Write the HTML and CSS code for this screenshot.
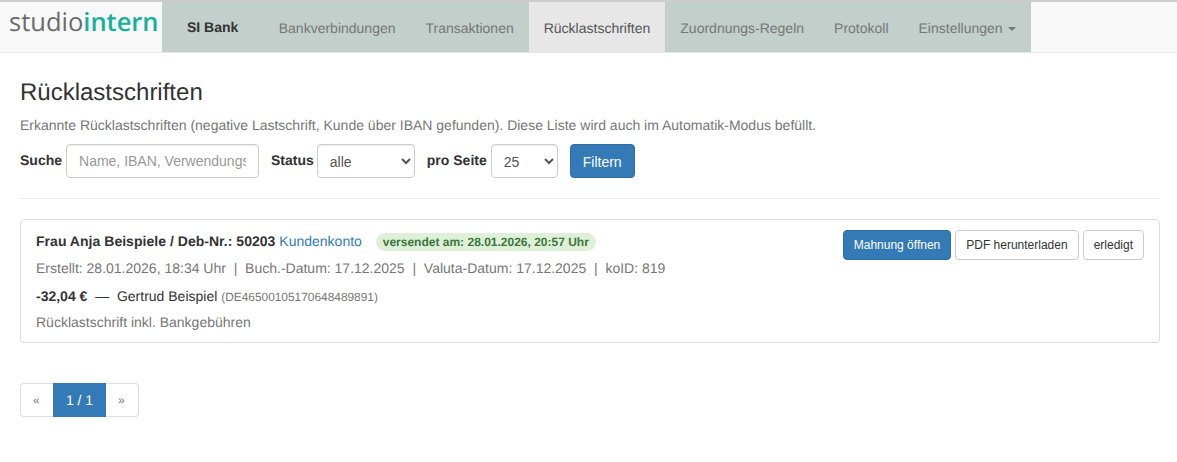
FILE: index.html
```html
<!DOCTYPE html>
<html lang="de">
<head>
<meta charset="utf-8">
<title>Rücklastschriften</title>
<link rel="stylesheet" href="styles.css">
</head>
<body>
<nav class="navbar">
  <a class="brand"><span class="brand-a">studio</span><span class="brand-b">intern</span></a>
  <ul class="nav">
    <li class="item title">SI Bank</li>
    <li class="item">Bankverbindungen</li>
    <li class="item">Transaktionen</li>
    <li class="item active">Rücklastschriften</li>
    <li class="item">Zuordnungs-Regeln</li>
    <li class="item">Protokoll</li>
    <li class="item">Einstellungen <span class="caret"></span></li>
  </ul>
</nav>
<main class="page">
  <h1>Rücklastschriften</h1>
  <p class="lead">Erkannte Rücklastschriften (negative Lastschrift, Kunde über IBAN gefunden). Diese Liste wird auch im Automatik-Modus befüllt.</p>
  <form class="filters">
    <label class="lbl">Suche</label>
    <input class="ctl search" placeholder="Name, IBAN, Verwendungszweck">
    <label class="lbl lbl-status">Status</label>
    <select class="ctl status"><option>alle</option></select>
    <label class="lbl lbl-seite">pro Seite</label>
    <select class="ctl perpage"><option>25</option></select>
    <button type="button" class="btn primary filter">Filtern</button>
  </form>
  <hr>
  <section class="card">
    <div class="card-body">
      <div class="line head"><b>Frau Anja Beispiele / Deb-Nr.: 50203</b> <a class="link">Kundenkonto</a> <span class="badge">versendet am: 28.01.2026, 20:57 Uhr</span></div>
      <div class="line meta">Erstellt: 28.01.2026, 18:34 Uhr &nbsp;|&nbsp; Buch.-Datum: 17.12.2025 &nbsp;|&nbsp; Valuta-Datum: 17.12.2025 &nbsp;|&nbsp; koID: 819</div>
      <div class="line amount"><b>-32,04 €</b> &nbsp;—&nbsp; Gertrud Beispiel <small>(DE46500105170648489891)</small></div>
      <div class="line note">Rücklastschrift inkl. Bankgebühren</div>
    </div>
    <div class="actions">
      <button type="button" class="btn primary sm">Mahnung öffnen</button>
      <button type="button" class="btn sm">PDF herunterladen</button>
      <button type="button" class="btn sm">erledigt</button>
    </div>
  </section>
  <div class="pager">
    <span class="pg first">«</span><span class="pg current">1 / 1</span><span class="pg last">»</span>
  </div>
</main>
</body>
</html>
```
FILE: styles.css
```css
* { box-sizing: border-box; }
html, body { margin: 0; padding: 0; }
body {
  font-family: "Liberation Sans", Arial, sans-serif;
  font-size: 14px;
  line-height: 20px;
  color: #333;
  background: #fff;
  overflow: hidden;
  text-rendering: geometricPrecision;
}
.navbar {
  display: flex;
  height: 53px;
  background: #f8f8f8;
  border-top: 2px solid #ccc;
  border-bottom: 1px solid #e7e7e7;
}
.brand {
  flex: 0 0 162px;
  padding: 2px 0 0 9px;
  font-family: "Open Sans", sans-serif;
  font-size: 25.5px;
  line-height: 37px;
  white-space: nowrap;
  overflow: hidden;
}
.brand-a { color: #6a6a6e; }
.brand-b { color: #14b29c; font-weight: 600; }
.nav {
  display: flex;
  margin: 0;
  padding: 0;
  list-style: none;
  background: #c2cfca;
}
.item {
  padding: 16px 15px 14px;
  color: #777;
  white-space: nowrap;
}
.title { padding: 15px 25.4px 15px 25px; font-weight: 700; color: #333; }
.active { background: #e7e7e7; color: #555; }
.caret {
  display: inline-block;
  width: 0;
  height: 0;
  margin-left: 2px;
  vertical-align: middle;
  border-top: 4px solid #777;
  border-left: 4px solid transparent;
  border-right: 4px solid transparent;
}
.page { padding: 0 17px 0 20px; }
h1 {
  margin: 24px 0 0;
  font-size: 24px;
  line-height: 32px;
  font-weight: 400;
}
.lead { margin: 6px 0 0; color: #777; }
.filters {
  display: flex;
  align-items: center;
  margin-top: 9px;
  height: 34px;
}
.lbl { font-weight: 700; margin-top: -3px; }
.ctl {
  height: 34px;
  padding: 6px 12px;
  font: inherit;
  color: #555;
  background: #fff;
  border: 1px solid #ccc;
  border-radius: 4px;
  box-shadow: inset 0 1px 1px rgba(0,0,0,.075);
}
select.ctl { padding: 7px 8px 5px; }
.ctl::placeholder { color: #999; opacity: 1; }
.search { width: 193px; margin-left: 4px; }
.lbl-status { margin-left: 12px; }
.status { width: 98px; margin-left: 3px; }
.lbl-seite { margin-left: 12px; }
.perpage { width: 67px; margin-left: 4px; }
.btn {
  font: inherit;
  background: #fff;
  color: #333;
  border: 1px solid #ccc;
  border-radius: 4px;
  padding: 7px 12px 5px;
  height: 34px;
  white-space: nowrap;
}
.primary { background: #337ab7; border-color: #2e6da4; color: #fff; }
.filter { margin-left: 12px; }
hr { margin: 20px 0 0; border: 0; border-top: 1px solid #eee; }
.card {
  display: flex;
  justify-content: space-between;
  margin-top: 20px;
  height: 124px;
  padding: 11px 15px;
  border: 1px solid #ddd;
  border-radius: 4px;
}
.line { white-space: nowrap; }
.head { height: 20px; }
.head b { letter-spacing: .03px; }
.link { color: #337ab7; }
.badge {
  display: inline-block;
  margin-left: 10px;
  padding: 0 7px;
  height: 18px;
  line-height: 18px;
  font-size: 12px;
  font-weight: 700;
  color: #3c763d;
  background: #dff0d8;
  border-radius: 9px;
}
.meta { margin-top: 7px; color: #777; }
.amount { margin-top: 8px; }
.amount small { font-size: 11.9px; color: #777; }
.note { margin-top: 5px; color: #777; }
.actions { display: flex; gap: 4px; margin-top: -1px; }
.sm { font-size: 12px; line-height: 18px; height: 30px; padding: 5px 10px; }
.pager { display: flex; margin-top: 40px; height: 34px; }
.pg {
  height: 34px;
  padding: 6px 12px;
  line-height: 20px;
  color: #777;
  border: 1px solid #ddd;
}
.first { width: 33px; border-radius: 4px 0 0 4px; border-right: 0; font-size: 12px; }
.last { width: 33px; border-radius: 0 4px 4px 0; border-left: 0; font-size: 12px; }
.current {
  width: 53px;
  text-align: center;
  padding: 6px 0;
  color: #fff;
  background: #337ab7;
  border-color: #337ab7;
}
```
